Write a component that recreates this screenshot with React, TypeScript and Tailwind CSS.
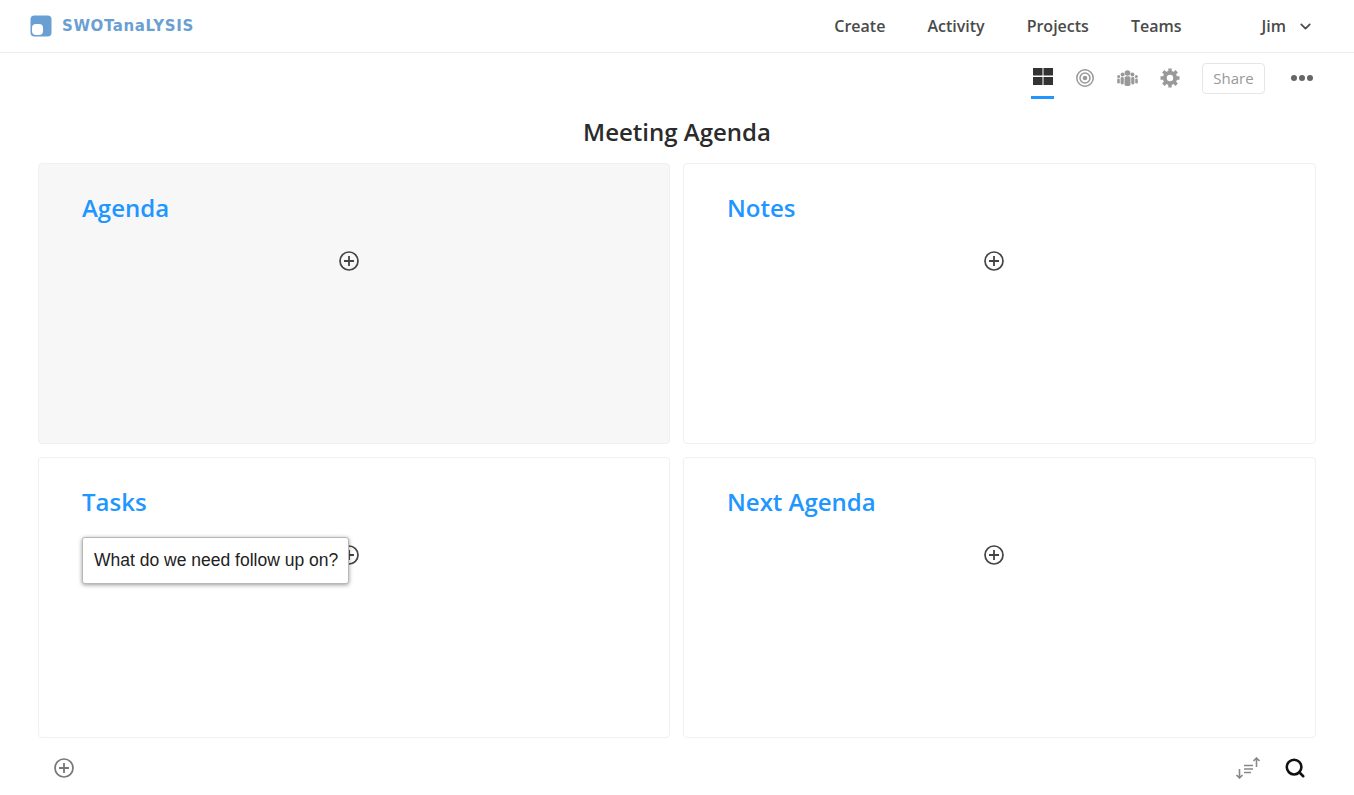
import { ChevronDown, Search } from "lucide-react";

const navItems = ["Create", "Activity", "Projects", "Teams"];

function PlusCircle({ color = "#444444" }: { color?: string }) {
  return (
    <svg width="20" height="20" viewBox="0 0 20 20" fill="none" stroke={color} strokeWidth="1.7">
      <circle cx="10" cy="10" r="9" />
      <path d="M10 5v10M5 10h10" strokeWidth="1.8" />
    </svg>
  );
}

function Card({ title, active, children }: { title: string; active?: boolean; children?: React.ReactNode }) {
  return (
    <div
      className={`relative h-[281px] rounded border border-[#f0f0f0] pl-[43px] pr-[54px] pt-[26px] ${
        active ? "bg-[#f7f7f7]" : "bg-white"
      }`}
    >
      <h2 className="text-[24px] leading-[36px] font-semibold text-[#2196ff]">{title}</h2>
      <div className="mt-[25px] flex justify-center">
        <PlusCircle />
      </div>
      {children}
    </div>
  );
}

export default function App() {
  return (
    <div className="h-[795px] w-[1354px] overflow-hidden bg-white font-['Open_Sans',sans-serif] text-[#333]">
      {/* Top nav */}
      <header className="flex h-[53px] items-center border-b border-[#ececec] pl-[30px] pr-[40px]">
        <div className="flex items-center gap-[10px]">
          <svg width="22" height="22" viewBox="0 0 22 22">
            <rect width="21" height="21" x="0.5" y="0.5" rx="4" fill="#6a9fd3" />
            <rect x="2" y="9" width="11" height="11" rx="4" fill="#ffffff" />
          </svg>
          <span className="font-['DejaVu_Sans',sans-serif] text-[15px] font-bold tracking-[0.6px] text-[#6a9fd3]">
            SWOTanaLYSIS
          </span>
        </div>
        <nav className="ml-auto flex items-center gap-[42px] text-[16px] font-semibold text-[#4a4a4a]">
          {navItems.map((item) => (
            <a key={item}>{item}</a>
          ))}
        </nav>
        <div className="ml-[80px] flex items-center gap-[11px] text-[16px] font-semibold text-[#4a4a4a]">
          <span>Jim</span>
          <ChevronDown className="h-[17px] w-[17px]" strokeWidth={2.4} />
        </div>
      </header>

      {/* Toolbar */}
      <div className="flex h-[50px] items-center justify-end pr-[41px]">
        <div className="flex h-[42px] w-[23px] flex-col items-center justify-center border-b-[3px] border-[#2196ff] pb-[1px]">
          <svg width="20" height="17" viewBox="0 0 20 17" fill="#333">
            <rect width="9.5" height="7.5" />
            <rect x="10.5" width="9.5" height="7.5" />
            <rect y="9" width="9.5" height="8" />
            <rect x="10.5" y="9" width="9.5" height="8" />
          </svg>
        </div>
        <svg className="ml-[22px]" width="18" height="18" viewBox="0 0 18 18" fill="none" stroke="#999">
          <circle cx="9" cy="9" r="8.2" strokeWidth="1.5" />
          <circle cx="9" cy="9" r="5" strokeWidth="1.5" />
          <circle cx="9" cy="9" r="2.3" fill="#999" stroke="none" />
        </svg>
        <svg className="ml-[23px]" width="21" height="16" viewBox="0 0 21 16" fill="#999">
          <circle cx="10.5" cy="3" r="2.8" />
          <rect x="7.5" y="6.2" width="6" height="9.8" rx="1.8" />
          <circle cx="5.6" cy="4.5" r="2" />
          <rect x="3.6" y="7" width="3.2" height="7.5" rx="1.4" />
          <circle cx="15.4" cy="4.5" r="2" />
          <rect x="14.2" y="7" width="3.2" height="7.5" rx="1.4" />
          <circle cx="1.7" cy="6.5" r="1.5" />
          <rect x="0.2" y="8.5" width="2.6" height="5" rx="1.2" />
          <circle cx="19.3" cy="6.5" r="1.5" />
          <rect x="18.2" y="8.5" width="2.6" height="5" rx="1.2" />
        </svg>
        <svg className="ml-[22px]" width="20" height="20" viewBox="0 0 20 20" fill="none" stroke="#999">
          <circle cx="10" cy="10" r="5.2" strokeWidth="4" />
          <path
            d="M10 0.5v3.5M10 16v3.5M0.5 10h3.5M16 10h3.5M3.3 3.3l2.5 2.5M14.2 14.2l2.5 2.5M3.3 16.7l2.5-2.5M14.2 5.8l2.5-2.5"
            strokeWidth="3.4"
          />
        </svg>
        <button className="ml-[22px] h-[31px] w-[63px] rounded border border-[#e6e6e6] text-[15px] font-normal text-[#999]">
          Share
        </button>
        <div className="ml-[26px] flex gap-[2px]">
          <span className="h-[6px] w-[6px] rounded-full bg-[#666]" />
          <span className="h-[6px] w-[6px] rounded-full bg-[#666]" />
          <span className="h-[6px] w-[6px] rounded-full bg-[#666]" />
        </div>
      </div>

      <h1 className="mt-[9px] text-center text-[24px] leading-[40px] font-semibold text-[#2b2b2b]">
        Meeting Agenda
      </h1>

      {/* Quadrants */}
      <div className="mt-[11px] grid grid-cols-[632px_633px] gap-x-[13px] gap-y-[13px] pl-[38px]">
        <Card title="Agenda" active />
        <Card title="Notes" />
        <Card title="Tasks">
          <div className="absolute left-[43px] top-[79px] flex h-[47px] w-[267px] items-center rounded-[3px] border border-[#b8b8b8] bg-white pl-[11px] font-['Liberation_Sans',sans-serif] text-[17.5px] whitespace-nowrap text-[#222] shadow-[0_1px_4px_rgba(0,0,0,0.4)]">
            What do we need follow up on?
          </div>
        </Card>
        <Card title="Next Agenda" />
      </div>

      {/* Footer */}
      <div className="mt-[19px] flex items-center pl-[54px] pr-[48px]">
        <PlusCircle color="#777777" />
        <svg className="ml-auto" width="26" height="22" viewBox="0 0 26 22" fill="none" stroke="#888" strokeWidth="1.6">
          <path d="M4.5 12v9M1.5 18l3 3 3-3" />
          <path d="M9 8.5h9M9 12h9M9 15.5h7" />
          <path d="M21.5 10V1M18.5 4l3-3 3 3" />
        </svg>
        <Search className="ml-[23px] h-[22px] w-[22px] text-[#111]" strokeWidth={2.8} />
      </div>
    </div>
  );
}
